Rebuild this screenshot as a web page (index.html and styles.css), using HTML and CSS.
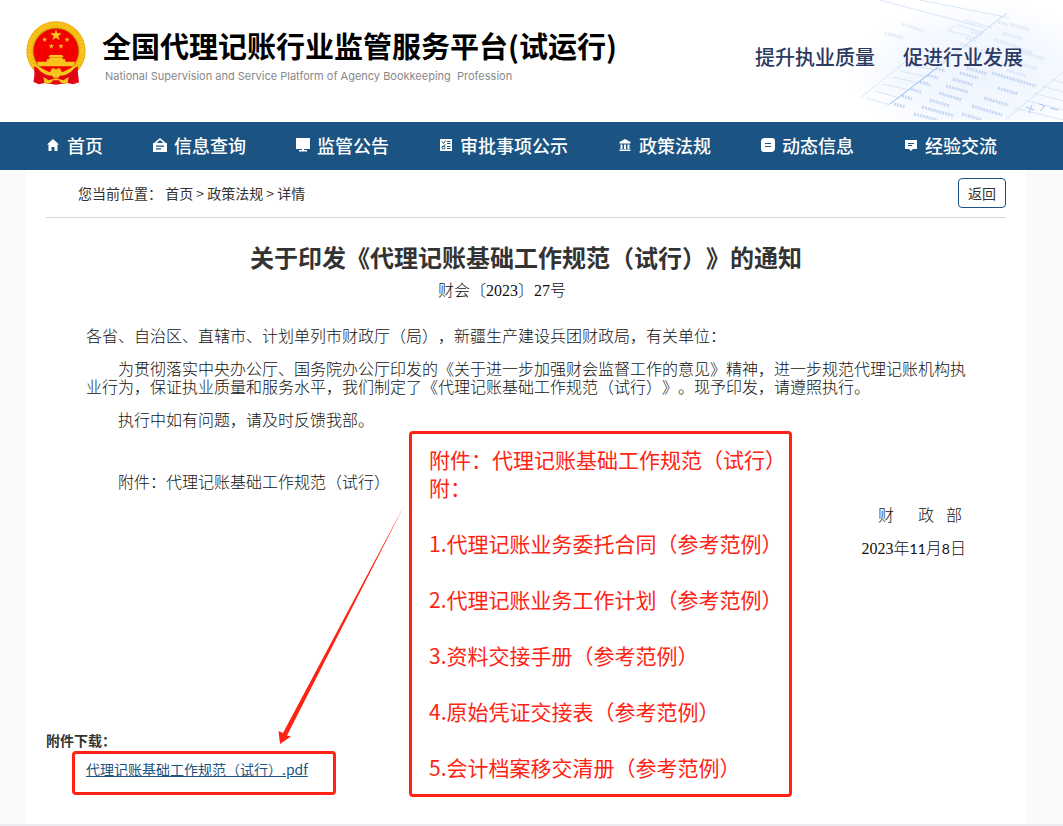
FILE: index.html
```html
<!DOCTYPE html>
<html lang="zh-CN">
<head>
    <meta charset="UTF-8">
    <meta name="viewport" content="width=device-width, initial-scale=1.0">
    <title>全国代理记账行业监管服务平台</title>
    <link rel="stylesheet" href="styles.css">
</head>
<body>
    <header class="header">
        <svg class="header-bg" viewBox="0 0 213 120" aria-hidden="true">
            <defs>
                <radialGradient id="fade" cx="0.6" cy="0.6" r="0.6">
                    <stop offset="0" stop-color="#eef4fe"/>
                    <stop offset="0.6" stop-color="#f4f8ff"/>
                    <stop offset="1" stop-color="#fff"/>
                </radialGradient>
            </defs>
            <path d="M0 0H213V120H0Z" fill="url(#fade)"/>
            <g fill="none" stroke="#d0e1f6" stroke-width="0.8">
                <path d="M10 98L60 58M16 98L40 105M25 91L50 98M33 84L59 90M42 77L69 83M50 71L78 77M58 65L87 70M68 58L96 63M107 25L135 33M99 31L128 38M115 20L142 28M105 25L98 31"/>
                <path d="M30 0L135 28M70 0L160 18M155 120L213 72M165 108L213 120M175 100L213 110M184 93L213 101M192 86L213 92M201 79L213 83"/>
            </g>
            <path d="M40 104L157 13" stroke="#c3dbf5" fill="none"/>
            <path d="M40 104L87 68" stroke="#9acbf2" fill="none"/>
            <g stroke="#a9c3ec" stroke-width="3" stroke-dasharray="2 1" opacity="0.6" fill="none">
                <path d="M86 68l9 3M78 75l10 3M70 82l10 3M61 89l10 3M52 96l10 3M44 104l11 3"/>
                <path d="M117 68l20 6M110 73l18 5M103 79l20 6M96 86l22 6M89 93l23 7M80 100l20 6M72 107l32 9M64 114l24 6"/>
                <path d="M142 73l44 13M148 88l20 6M134 98l24 7M122 106l30 9M112 114l20 6"/>
            </g>
            <g stroke="#c9d9f3" stroke-width="3" stroke-dasharray="2 1" opacity="0.5" fill="none">
                <path d="M122 32l10 3M116 38l10 3M110 44l10 3M148 22l10 3M160 24l20 6M153 33l20 6M144 40l22 6M131 50l20 6M163 47l20 6M172 52l22 7M165 62l22 7M35 33l18 5M52 24l22 7M157 70l20 6"/>
            </g>
            <path d="M176 107l8 3m-2-5l-3 8m10-9l6 2l-5 5m10-3l8 2" stroke="#a9c3ec" fill="none"/>
        </svg>
        <div class="brand">
            <svg class="emblem" viewBox="0 0 180 192" role="img" aria-label="国徽">
                <circle cx="90" cy="90" r="89" fill="#eeb010"/>
                <circle cx="90" cy="90" r="79" fill="none" stroke="#f8c41c" stroke-width="13" stroke-dasharray="9 2"/>
                <circle cx="90" cy="90" r="69" fill="#b3760c"/>
                <circle cx="90" cy="90" r="67" fill="#f50000"/>
                <path d="M24 136L52 150L90 160L128 150L156 136C154 158 158 166 159 184L142 190L124 186L90 191L56 186L38 190L22 182C27 166 25 150 24 136Z" fill="#e10613"/>
                <g fill="#f8c51c">
                    <path d="M90 25L94 37H107L97 45L101 57L90 50L79 57L83 45L73 37H86Z"/>
                    <path d="M56 48l2 5h6l-5 4l2 6l-5-4l-5 4l2-6l-5-4h6zM123 48l2 5h6l-5 4l2 6l-5-4l-5 4l2-6l-5-4h6zM76 68l2 5h6l-5 4l2 6l-5-4l-5 4l2-6l-5-4h6zM105 68l2 5h6l-5 4l2 6l-5-4l-5 4l2-6l-5-4h6z"/>
                    <path d="M72 102H108L113 108H67ZM70 109H110V115H70ZM62 115H118V122H62ZM33 122H147L142 136H38Z"/>
                    <path d="M30 134C48 142 62 150 73 154C74 142 82 138 90 146C98 138 106 142 107 154C118 150 132 142 150 134C136 156 116 168 90 163C64 168 44 156 30 134Z"/>
                    <path d="M76 158L90 150L104 158L98 170H82ZM52 168L68 178L90 172L112 178L128 168L124 188L106 186L98 178H82L74 186L56 188Z"/>
                </g>
            </svg>
            <div class="brand-text">
                <h1>全国代理记账行业监管服务平台(试运行)</h1>
                <p>National Supervision and Service Platform of Agency Bookkeeping&nbsp; Profession</p>
            </div>
        </div>
        <p class="slogan"><span>提升执业质量</span><span>促进行业发展</span></p>
    </header>

    <nav class="nav">
        <a href="#">
            <svg viewBox="0 0 14 14"><path d="M7 1L1 6.5H2.500V13H5.500V9H8.500V13H11.500V6.500H13Z"/></svg>
            首页
        </a>
        <a href="#">
            <svg viewBox="0 0 14 14"><path fill-rule="evenodd" d="M7 0L1 5H0V14H14V5H13ZM7 2L10.500 5H3.500ZM3 7.500H11V8.700H3ZM3 10.300H8V11.500H3Z"/></svg>
            信息查询
        </a>
        <a href="#">
            <svg viewBox="0 0 14 14"><path d="M0 0H14V11H8V12H11V13.500H3V12H6V11H0Z"/></svg>
            监管公告
        </a>
        <a href="#">
            <svg viewBox="0 0 14 14"><path d="M1 1H13V13H1Z"/><path class="line" d="M3 3.500L4.500 5.500L6.500 2.500M8 3.500H11.500M8 5.500H11.500M8 8.500H11.500M8 10.500H11.500M6.500 6.500L3.500 9"/><circle class="line" cx="4.500" cy="9.500" r="1.500"/></svg>
            审批事项公示
        </a>
        <a href="#">
            <svg viewBox="0 0 14 14"><path d="M7 1L1.500 4V5.500H12.500V4ZM2.500 6.500H4.500V11H2.500ZM6 6.500H8V11H6ZM9.500 6.500H11.500V11H9.500ZM1.500 11.500H12.500V13H1.500Z"/></svg>
            政策法规
        </a>
        <a href="#">
            <svg viewBox="0 0 14 14"><path d="M4 0H11A3 3 0 0 1 14 3V10A4 4 0 0 1 10 14H3A3 3 0 0 1 0 11V4A4 4 0 0 1 4 0Z"/><path class="line" d="M4 5.500H10M4 8.500H10"/></svg>
            动态信息
        </a>
        <a href="#">
            <svg viewBox="0 0 14 14"><path d="M1 2H13V11H9L7 13L5 11H1Z"/><path class="line" d="M4 5.500H10M4 7.500H8"/></svg>
            经验交流
        </a>
    </nav>

    <main class="main">
        <div class="location">
            <p>您当前位置： <a href="#">首页</a> &gt; <a href="#">政策法规</a> &gt; <span>详情</span></p>
            <button type="button" class="back">返回</button>
        </div>

        <article class="article">
            <h2>关于印发《代理记账基础工作规范（试行）》的通知</h2>
            <p class="doc-no">财会〔2023〕27号</p>
            <p>各省、自治区、直辖市、计划单列市财政厅（局），新疆生产建设兵团财政局，有关单位：</p>
            <p class="indent">为贯彻落实中央办公厅、国务院办公厅印发的《关于进一步加强财会监督工作的意见》精神，进一步规范代理记账机构执业行为，保证执业质量和服务水平，我们制定了《代理记账基础工作规范（试行）》。现予印发，请遵照执行。</p>
            <p class="indent">执行中如有问题，请及时反馈我部。</p>
            <p class="indent appendix">附件：代理记账基础工作规范（试行）</p>
            <p class="sign">财&nbsp;&nbsp;&nbsp;&nbsp;&nbsp;&nbsp;政&nbsp;&nbsp;&nbsp;部&nbsp;</p>
            <p class="sign">2023年<span class="num">11</span>月<span class="num">8</span>日</p>
        </article>

        <section class="download">
            <h3>附件下载：</h3>
            <div class="file"><a href="#">代理记账基础工作规范（试行）.pdf</a></div>
        </section>

        <!-- 标注 -->
        <svg class="arrow" viewBox="0 0 130 240" aria-hidden="true">
            <path d="M129 0L7 229L2.500 227L4 240L15 232.500L11 231.500Z"/>
        </svg>
        <aside class="note">
            <p>附件：代理记账基础工作规范（试行）</p>
            <p>附：</p>
            <ul>
                <li>1.代理记账业务委托合同（参考范例）</li>
                <li>2.代理记账业务工作计划（参考范例）</li>
                <li>3.资料交接手册（参考范例）</li>
                <li>4.原始凭证交接表（参考范例）</li>
                <li>5.会计档案移交清册（参考范例）</li>
            </ul>
        </aside>
    </main>
</body>
</html>
```
FILE: styles.css
```css
*,
*::after {
    box-sizing: border-box;
    margin: 0;
    padding: 0;
}

body {
    display: flex;
    flex-direction: column;
    min-height: 100vh;
    font-family: "Noto Sans CJK SC", sans-serif;
    font-size: 14px;
    color: #333;
    background: #fafafa;
    border-bottom: 2px solid #ebebef;
    text-spacing-trim: space-all;
}

a {
    color: inherit;
    text-decoration: none;
}

/* 头部 */
.header {
    position: relative;
    display: flex;
    justify-content: space-between;
    align-items: flex-start;
    height: 122px;
    padding: 21px 40px 0 26px;
    background: #fff;
}

.header-bg {
    position: absolute;
    top: 0;
    right: 0;
    width: 213px;
    height: 120px;
}

.brand {
    display: flex;
    gap: 16px;
}

.emblem {
    width: 60px;
    height: 64px;
}

.brand-text h1 {
    font-size: 29px;
    line-height: 48px;
    font-weight: bold;
    color: #000;
    white-space: nowrap;
}

.brand-text p {
    padding-left: 3px;
    font-family: Inter, sans-serif;
    font-size: 11px;
    line-height: 14px;
    color: #888;
}

.slogan {
    position: relative;
    display: flex;
    gap: 28px;
    padding-top: 20px;
    font-size: 20px;
    line-height: 32px;
    font-weight: 500;
    color: #2b3a63;
    white-space: nowrap;
}

/* 导航 */
.nav {
    display: flex;
    height: 48px;
    padding: 0 0 2px 21px;
    background: #1b5482;
}

.nav a {
    display: flex;
    align-items: center;
    gap: 7px;
    padding: 0 25px;
    font-size: 18px;
    font-weight: 500;
    color: #fff;
    white-space: nowrap;
}

.nav svg {
    width: 14px;
    height: 14px;
    fill: #fff;
}

.nav .line {
    fill: none;
    stroke: #1b5482;
}

/* 内容 */
.main {
    position: relative;
    flex: 1;
    display: flex;
    flex-direction: column;
    margin: 0 37px 0 26px;
    padding: 0 20px 45px;
    background: #fff;
}

.location {
    display: flex;
    justify-content: space-between;
    align-items: center;
    height: 48px;
    padding: 0 0 2px 32px;
    border-bottom: 1px solid #d8d8d8;
}

.back {
    width: 48px;
    height: 30px;
    font-family: inherit;
    font-size: 14px;
    color: #333;
    background: #fff;
    border: 1px solid #1b5482;
    border-radius: 4px;
    cursor: pointer;
}

.article {
    padding: 21px 40px 0;
    font-family: "Liberation Serif", "Noto Sans CJK SC", serif;
    font-size: 16px;
    line-height: 18px;
    font-weight: 300;
    color: #111;
}

.article h2 {
    font-family: "Noto Sans CJK SC", sans-serif;
    font-size: 24px;
    line-height: 36px;
    font-weight: bold;
    text-align: center;
    color: #333;
}

.article p {
    margin-bottom: 15px;
}

.article .doc-no {
    margin: 7px 0 28px;
    padding-right: 48px;
    text-align: center;
}

.article .indent {
    text-indent: 32px;
}

.article .appendix {
    margin-top: 44px;
}

.article .sign {
    text-align: right;
}

.num {
    font-family: Lato, sans-serif;
    font-size: 14px;
    font-weight: 400;
}

.download {
    margin-top: auto;
}

.download h3 {
    font-size: 14px;
    line-height: 20px;
    margin-bottom: 9px;
}

.file {
    position: relative;
    padding-left: 40px;
    line-height: 20px;
}

.file a {
    color: #1b5482;
    text-decoration: underline;
}

/* 红色标注框 */
.file::after {
    content: "";
    position: absolute;
    top: -8px;
    left: 26px;
    width: 264px;
    height: 44px;
    border: 3px solid #ff2313;
    border-radius: 4px;
    pointer-events: none;
}

.arrow {
    position: absolute;
    top: 334px;
    left: 250px;
    width: 130px;
    height: 240px;
    fill: #ff2313;
}

.note {
    position: absolute;
    top: 261px;
    left: 383px;
    padding: 11px 0 13px 17px;
    width: 383px;
    border: 3px solid #ff2313;
    border-radius: 4px;
    font-size: 21px;
    line-height: 28px;
    color: #ff2313;
    white-space: nowrap;
}

.note ul {
    list-style: none;
}

.note li {
    margin-top: 28px;
}
```
